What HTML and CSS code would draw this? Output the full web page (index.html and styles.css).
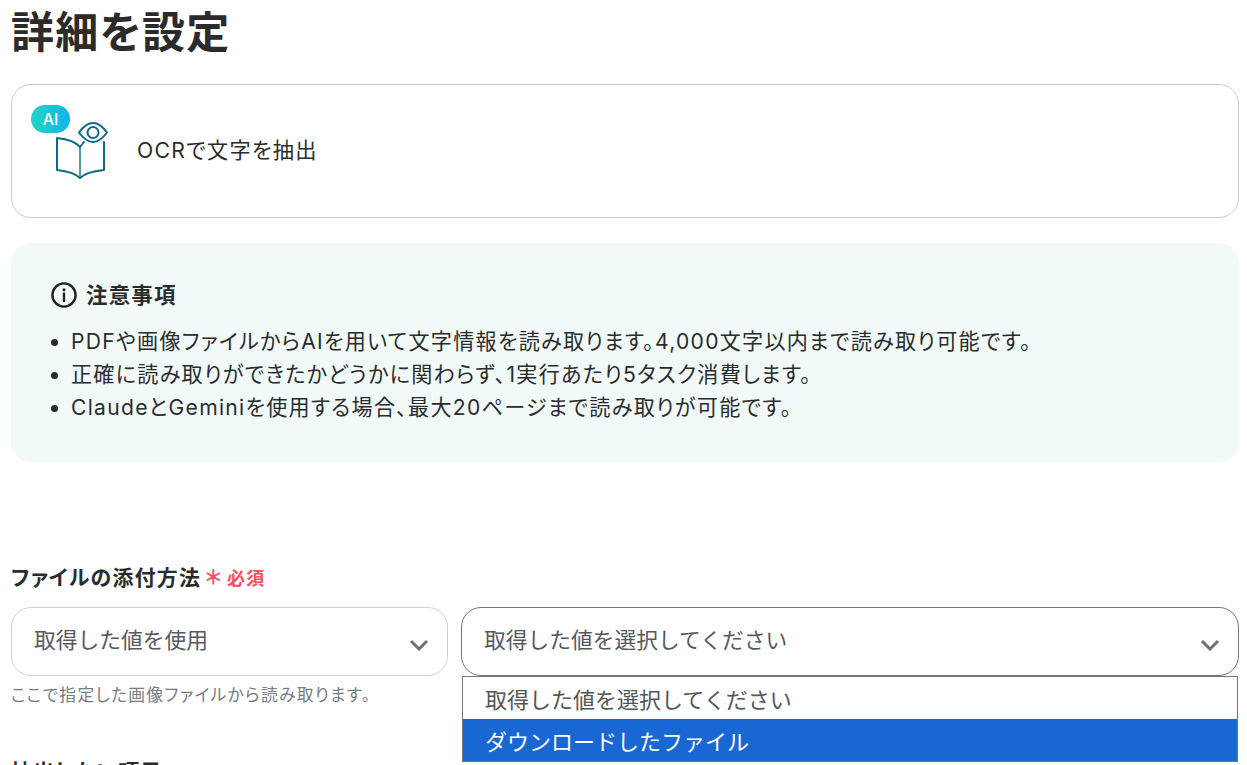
FILE: index.html
```html
<!DOCTYPE html>
<html lang="ja">
<head>
<meta charset="utf-8">
<title>詳細を設定</title>
<link rel="stylesheet" href="styles.css">
</head>
<body>
<main class="page">
  <h1 class="title">詳細を設定</h1>
  <section class="action-card">
    <div class="action-icon">
      <span class="ai-badge">AI</span>
      <svg class="book" viewBox="0 0 54 60" width="54" height="60" fill="none" stroke="#0f6b85" stroke-width="2" stroke-linejoin="round" stroke-linecap="round">
        <path d="M25 28 C21 23 12 20 2 19 V51 C11 52 20 54 25 59 C30 54 39 52 49 51 V23"/>
        <path d="M25 28 V59" stroke-width="1.4"/>
        <path d="M25 28 L29 23"/>
        <path d="M24 13.500 C28 8 33 4 38 4 C43 4 48 8 52 13.500 C48 19 43 23 38 23 C33 23 28 19 24 13.500 Z"/>
        <circle cx="38" cy="13.500" r="5.500"/>
      </svg>
    </div>
    <span class="action-name">OCRで文字を抽出</span>
  </section>
  <section class="notice">
    <h2 class="notice-title">
      <svg class="info" viewBox="0 0 26 26" width="26" height="26" fill="none" stroke="#222" stroke-width="2.4"><circle cx="13" cy="13" r="11.600"/><path d="M13 11.500V19" stroke-linecap="round"/><circle cx="13" cy="7.800" r="1.500" fill="#222" stroke="none"/></svg>
      注意事項
    </h2>
    <ul class="notice-list">
      <li>PDFや画像ファイルからAIを用いて文字情報を読み取ります。4,000文字以内まで読み取り可能です。</li>
      <li>正確に読み取りができたかどうかに関わらず、1実行あたり5タスク消費します。</li>
      <li>ClaudeとGeminiを使用する場合、最大20ページまで読み取りが可能です。</li>
    </ul>
  </section>
  <section class="field">
    <div class="field-label">ファイルの添付方法<span class="required"><span class="star">＊</span>必須</span></div>
    <div class="select-row">
      <div class="select-col-left">
        <div class="select">取得した値を使用<svg class="chev" viewBox="0 0 20 12" width="20" height="12" fill="none" stroke="#6f6f6f" stroke-width="3"><path d="M2 2l8 8 8-8"/></svg></div>
        <p class="hint">ここで指定した画像ファイルから読み取ります。</p>
      </div>
      <div class="select-col-right">
        <div class="select select-open">取得した値を選択してください<svg class="chev" viewBox="0 0 20 12" width="20" height="12" fill="none" stroke="#6f6f6f" stroke-width="3"><path d="M2 2l8 8 8-8"/></svg></div>
        <div class="dropdown">
          <div class="option">取得した値を選択してください</div>
          <div class="option option-active">ダウンロードしたファイル</div>
        </div>
      </div>
    </div>
  </section>
  <div class="next-label">抽出したい項目</div>
</main>
</body>
</html>
```
FILE: styles.css
```css
html, body { margin: 0; padding: 0; height: 765px; overflow: hidden; background: #fff; }
body {
  font-family: Inter, "Noto Sans CJK JP", sans-serif;
  color: #2b2b2b;
  font-feature-settings: "palt";
  letter-spacing: 0.08em;
}
.page { padding: 0 8px 0 11px; }
.title { margin: 0; height: 84px; font-size: 43px; line-height: 64px; font-weight: 700; }
.action-card {
  box-sizing: border-box; height: 134px; border: 1px solid #c9cbce; border-radius: 20px;
  display: flex; align-items: center; padding-left: 19px; gap: 36px;
}
.action-name { font-size: 21.2px; line-height: 30px; margin-top: -2px; }
.action-icon { position: relative; width: 70px; height: 76px; flex: none; margin-top: -16px; }
.ai-badge {
  position: absolute; left: 0; top: 0; width: 39px; height: 28px; border-radius: 14px;
  background: linear-gradient(90deg, #22d3c5, #10b4ee); color: #fff;
  font-size: 16px; font-weight: 500; line-height: 28px; text-align: center; letter-spacing: 0;
}
.book { position: absolute; left: 24px; top: 14px; }
.notice {
  box-sizing: border-box; height: 219px; margin-top: 25px; background: #f1faf9; border-radius: 20px;
  padding: 36px 40px 0;
}
.notice-title { margin: 0; display: flex; align-items: center; gap: 9px; font-size: 21.4px; line-height: 32px; font-weight: 700; }
.info { flex: none; }
.notice-list { margin: 14px 0 0; padding: 0 0 0 20px; font-size: 21.1px; line-height: 33px; }
.field { margin-top: 101px; }
.field-label { font-size: 20.9px; font-weight: 700; line-height: 30px; }
.required { color: #ff4d63; font-size: 18px; margin-left: 4px; }
.star { font-size: 20px; margin-right: 4px; }
.select-row { display: flex; gap: 13px; margin-top: 13px; }
.select-col-left { width: 437px; flex: none; }
.select-col-right { flex: 1; position: relative; }
.select {
  box-sizing: border-box; height: 69px; border: 1px solid #cdd1d6; border-radius: 20px;
  padding: 0 22px; font-size: 21.75px; line-height: 64px; color: #555a60; position: relative;
  font-feature-settings: normal; letter-spacing: 0;
}
.select-open { border-color: #767676; }
.chev { position: absolute; right: 18px; top: 31px; }
.hint { margin: 8px 0 0; font-size: 16.8px; line-height: 22px; color: #777c82; }
.dropdown {
  position: absolute; left: 1px; right: 1px; top: 69px; border: 1px solid #767676; background: #fff; box-sizing: border-box;
}
.option { height: 42px; padding: 0 22px; font-size: 22px; line-height: 46px; color: #555; font-feature-settings: normal; letter-spacing: 0; }
.option-active { background: #1967d2; color: #fff; }
.next-label { margin-top: 51px; font-size: 20.9px; font-weight: 700; line-height: 30px; }
```
